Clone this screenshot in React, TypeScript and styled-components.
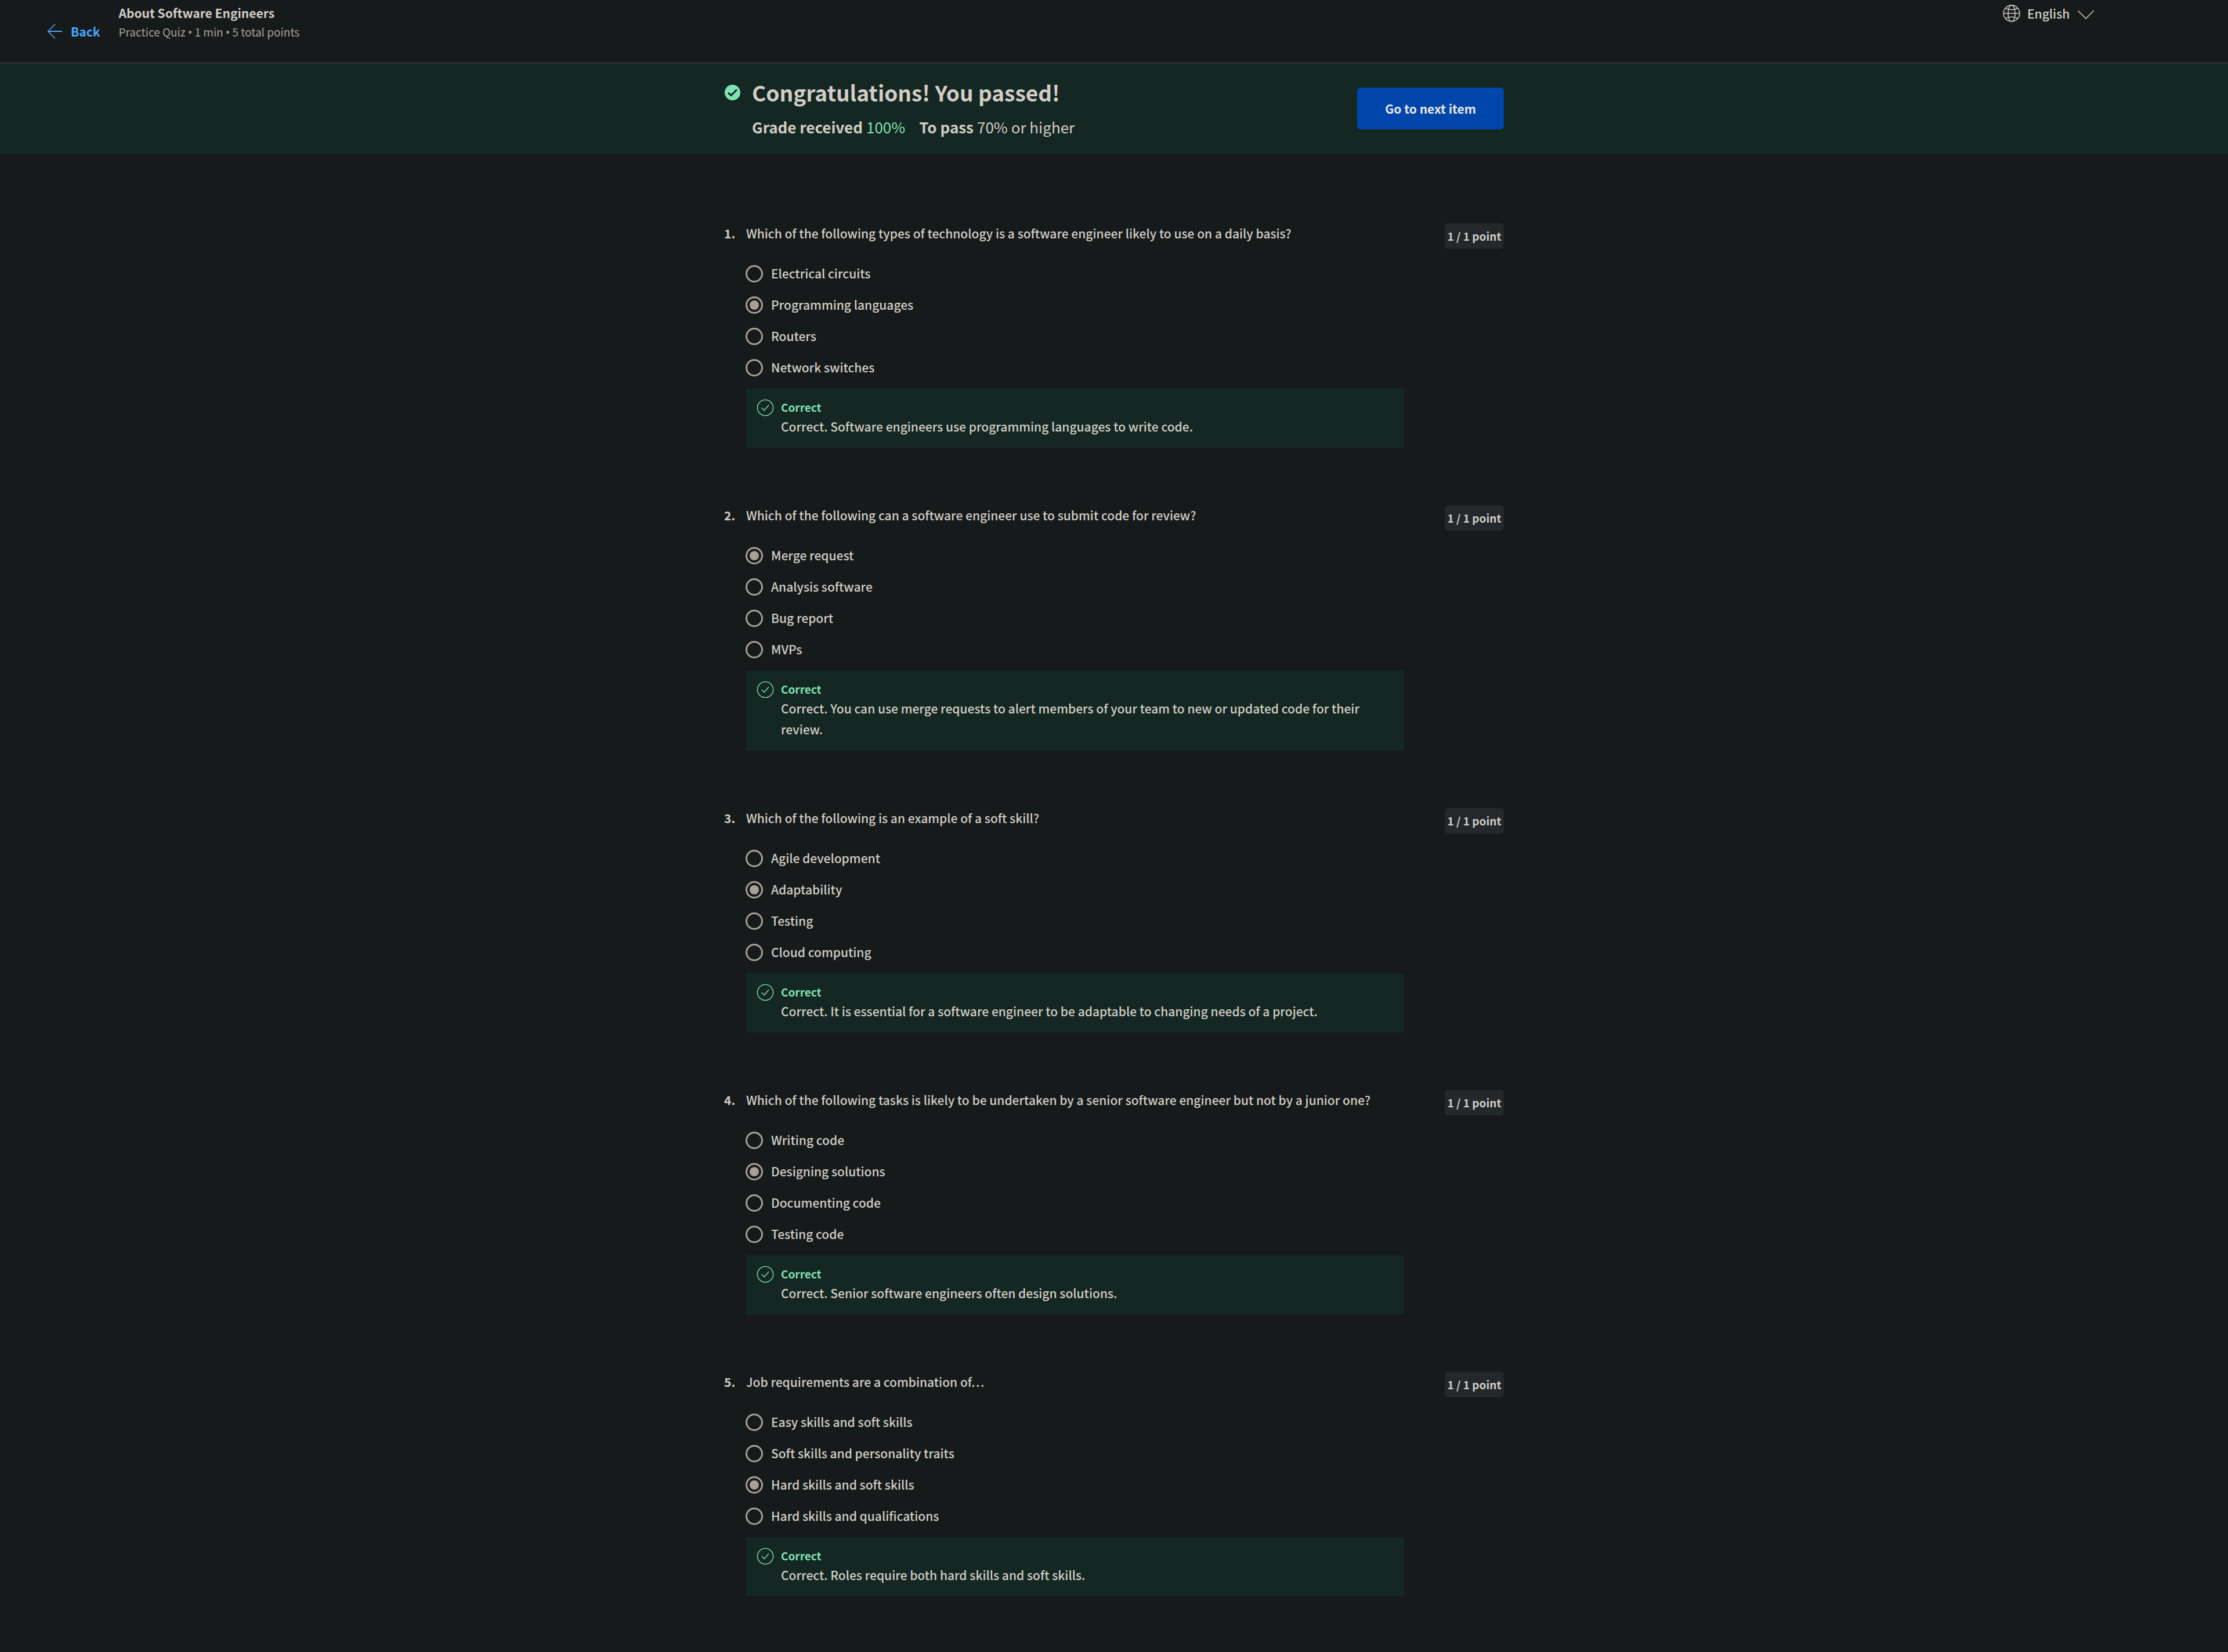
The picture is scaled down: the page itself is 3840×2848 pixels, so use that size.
import React from 'react';
import styled, { createGlobalStyle } from 'styled-components';

const color = {
  page: '#171a1b',
  success: '#152722',
  badge: '#25282b',
  line: '#46494a',
  text: '#d1cdc7',
  muted: '#a8a095',
  link: '#4ba6ff',
  primary: '#0046aa',
  onPrimary: '#e8e6e3',
  green: '#7ee2b5',
};

const GlobalStyle = createGlobalStyle`
  *, *::before, *::after { box-sizing: border-box; }
  body {
    margin: 0;
    min-height: 100vh;
    background: ${color.page};
    color: ${color.text};
    font-family: "Noto Sans CJK SC", "Noto Sans", sans-serif;
    font-size: 21px;
    font-weight: 500;
    line-height: 36px;
  }
  h1, h2, h3, p, ol, ul, dl, dd { margin: 0; padding: 0; font: inherit; }
  ol, ul { list-style: none; }
  svg { display: block; flex: none; }
`;

const Header = styled.header`
  display: flex;
  align-items: flex-start;
  height: 109px;
  padding: 0 230px 0 80px;
  border-bottom: 1px solid ${color.line};
`;

const BackLink = styled.a`
  display: flex;
  align-items: center;
  gap: 12px;
  height: 108px;
  margin-right: 32px;
  color: ${color.link};
  font-weight: 700;
  text-decoration: none;
`;

const ItemInfo = styled.div`
  flex: 1;
  padding-top: 4px;
`;

const ItemTitle = styled.h1`
  && { font-weight: 700; }
`;

const ItemMeta = styled.p`
  && {
    color: ${color.muted};
    font-size: 19px;
    font-weight: 400;
    line-height: 30px;
  }
`;

const Bullet = styled.span`
  font-family: "Noto Sans", sans-serif;
`;

const LanguagePicker = styled.label`
  display: flex;
  align-items: center;
  gap: 12px;
  height: 30px;
  margin-top: 8px;
`;

const LanguageSelect = styled.select`
  appearance: none;
  padding: 0;
  border: 0;
  background: transparent;
  color: inherit;
  font: inherit;
  line-height: 30px;
`;

const Banner = styled.section`
  padding: 0 48px;
  background: ${color.success};
`;

const Column = styled.div`
  width: 100%;
  max-width: 1344px;
  margin: 0 auto;
`;

const BannerRow = styled(Column)`
  display: flex;
  align-items: center;
  justify-content: space-between;
  min-height: 156px;
`;

const Result = styled.div`
  display: grid;
  grid-template-columns: 28px auto;
  align-items: center;
  gap: 16px 20px;
`;

const ResultTitle = styled.h2`
  && {
    font-size: 37px;
    font-weight: 700;
    line-height: 48px;
  }
`;

const Grades = styled.dl`
  grid-column: 2;
  display: flex;
  gap: 24px;
  && {
    font-size: 26px;
    line-height: 40px;
  }
`;

const Grade = styled.div<{ $good?: boolean }>`
  display: flex;
  gap: 6px;
  dt { font-weight: 700; }
  dd {
    color: ${(p) => (p.$good ? color.green : 'inherit')};
    font-weight: 400;
  }
`;

const NextButton = styled.button`
  height: 72px;
  padding: 0 48px;
  border: 0;
  border-radius: 6px;
  background: ${color.primary};
  color: ${color.onPrimary};
  font: inherit;
  font-weight: 700;
  cursor: pointer;
`;

const Main = styled.main`
  padding: 119px 48px 96px;
`;

const QuestionList = styled.ol`
  display: flex;
  flex-direction: column;
  gap: 98px;
`;

const QuestionItem = styled.li`
  display: flex;
  align-items: flex-start;
`;

const Number = styled.span`
  width: 38px;
  font-weight: 700;
`;

const Body = styled.div`
  flex: 1;
`;

const Options = styled.div`
  display: grid;
  gap: 24px;
  margin: 37px 0 21px -1px;
`;

const Option = styled.label`
  display: flex;
  align-items: flex-start;
  gap: 14px;
  height: 30px;
  line-height: 28px;
`;

const Radio = styled.input`
  appearance: none;
  display: grid;
  place-content: center;
  width: 30px;
  height: 30px;
  margin: 0;
  border: 3px solid ${color.muted};
  border-radius: 50%;
  &:checked::before {
    content: "";
    width: 16px;
    height: 16px;
    border-radius: 50%;
    background: ${color.muted};
  }
`;

const Feedback = styled.div`
  display: flex;
  gap: 12px;
  padding: 17px 18px 19px;
  background: ${color.success};
`;

const FeedbackTitle = styled.p`
  && {
    color: ${color.green};
    font-size: 19px;
    font-weight: 700;
    line-height: 30px;
  }
`;

const Points = styled.span`
  min-width: 102px;
  margin: 1px 0 0 70px;
  padding: 0 4px;
  border-radius: 6px;
  background: ${color.badge};
  font-size: 19px;
  font-weight: 700;
  line-height: 44px;
  text-align: center;
  white-space: nowrap;
`;

const ArrowIcon = () => (
  <svg width="30" height="30" viewBox="0 0 30 30" fill="none" stroke="currentColor" aria-hidden="true">
    <path d="M3 15H27" strokeWidth="2" />
    <path d="M15 2.5L2.8 15L15 27.5" strokeWidth="1.5" />
  </svg>
);

const GlobeIcon = () => (
  <svg width="30" height="30" viewBox="0 0 30 30" fill="none" stroke="currentColor" strokeWidth="1.5" aria-hidden="true">
    <circle cx="15" cy="15" r="13.9" />
    <path d="M15 1C11.5 1 9 7 9 15S11.500 29 15 29S21 23 21 15S18.500 1 15 1Z" />
    <path d="M1 15H29" />
    <path d="M4.300 6.200C10 9.500 20 9.500 25.700 6.200M4.300 23.800C10 20.500 20 20.500 25.700 23.800" />
  </svg>
);

const ChevronIcon = () => (
  <svg width="30" height="30" viewBox="0 0 30 30" fill="none" stroke="currentColor" strokeWidth="1.5" aria-hidden="true">
    <path d="M1.500 10.500L15 24L28.500 10.500" />
  </svg>
);

const PassedIcon = () => (
  <svg width="28" height="28" viewBox="0 0 28 28" aria-hidden="true">
    <circle cx="14.500" cy="14.500" r="13.500" fill={color.green} />
    <path d="M7 14.800L12 19.500L22 9.500" fill="none" stroke={color.success} strokeWidth="3" />
  </svg>
);

const CorrectIcon = () => (
  <svg width="30" height="32" viewBox="0 0 30 32" fill="none" stroke={color.green} strokeWidth="1.4" aria-hidden="true">
    <circle cx="15" cy="16" r="13.6" />
    <path d="M8.700 16L13.200 20.500L21 11.300" />
  </svg>
);

interface QuizQuestion {
  prompt: string;
  options: string[];
  selected: number;
  feedback: string;
}

const questions: QuizQuestion[] = [
  {
    prompt: 'Which of the following types of technology is a software engineer likely to use on a daily basis?',
    options: ['Electrical circuits', 'Programming languages', 'Routers', 'Network switches'],
    selected: 1,
    feedback: 'Correct. Software engineers use programming languages to write code.',
  },
  {
    prompt: 'Which of the following can a software engineer use to submit code for review?',
    options: ['Merge request', 'Analysis software', 'Bug report', 'MVPs'],
    selected: 0,
    feedback: 'Correct. You can use merge requests to alert members of your team to new or updated code for their review.',
  },
  {
    prompt: 'Which of the following is an example of a soft skill?',
    options: ['Agile development', 'Adaptability', 'Testing', 'Cloud computing'],
    selected: 1,
    feedback: 'Correct. It is essential for a software engineer to be adaptable to changing needs of a project.',
  },
  {
    prompt: 'Which of the following tasks is likely to be undertaken by a senior software engineer but not by a junior one?',
    options: ['Writing code', 'Designing solutions', 'Documenting code', 'Testing code'],
    selected: 1,
    feedback: 'Correct. Senior software engineers often design solutions.',
  },
  {
    prompt: 'Job requirements are a combination of…',
    options: ['Easy skills and soft skills', 'Soft skills and personality traits', 'Hard skills and soft skills', 'Hard skills and qualifications'],
    selected: 2,
    feedback: 'Correct. Roles require both hard skills and soft skills.',
  },
];

const Question = ({ index, question }: { index: number; question: QuizQuestion }) => {
  const promptId = `question-${index}`;
  return (
    <QuestionItem>
      <Number>{index}.</Number>
      <Body>
        <h3 id={promptId}>{question.prompt}</h3>
        <Options role="radiogroup" aria-labelledby={promptId}>
          {question.options.map((option, i) => (
            <Option key={option}>
              <Radio type="radio" name={promptId} defaultChecked={i === question.selected} />
              {option}
            </Option>
          ))}
        </Options>
        <Feedback>
          <CorrectIcon />
          <div>
            <FeedbackTitle>Correct</FeedbackTitle>
            <p>{question.feedback}</p>
          </div>
        </Feedback>
      </Body>
      <Points>1 / 1 point</Points>
    </QuestionItem>
  );
};

export default function App() {
  return (
    <>
      <GlobalStyle />
      <Header>
        <BackLink href="#back">
          <ArrowIcon />
          Back
        </BackLink>
        <ItemInfo>
          <ItemTitle>About Software Engineers</ItemTitle>
          <ItemMeta>
            Practice Quiz <Bullet>•</Bullet> 1 min <Bullet>•</Bullet> 5 total points
          </ItemMeta>
        </ItemInfo>
        <LanguagePicker>
          <GlobeIcon />
          <LanguageSelect aria-label="Language" defaultValue="en">
            <option value="en">English</option>
          </LanguageSelect>
          <ChevronIcon />
        </LanguagePicker>
      </Header>
      <Banner>
        <BannerRow>
          <Result>
            <PassedIcon />
            <ResultTitle>Congratulations! You passed!</ResultTitle>
            <Grades>
              <Grade $good>
                <dt>Grade received</dt>
                <dd>100%</dd>
              </Grade>
              <Grade>
                <dt>To pass</dt>
                <dd>70% or higher</dd>
              </Grade>
            </Grades>
          </Result>
          <NextButton type="button">Go to next item</NextButton>
        </BannerRow>
      </Banner>
      <Main>
        <Column>
          <QuestionList>
            {questions.map((question, i) => (
              <Question key={question.prompt} index={i + 1} question={question} />
            ))}
          </QuestionList>
        </Column>
      </Main>
    </>
  );
}
